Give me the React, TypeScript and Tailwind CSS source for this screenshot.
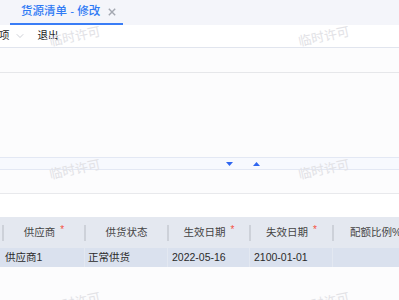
import { ChevronDown } from 'lucide-react';

const font = { fontFamily: '"Liberation Sans", "Noto Sans CJK SC", sans-serif' };

function Mark({ className }: { className: string }) {
    return (
        <span className={`absolute pointer-events-none select-none text-[13px] text-[#e2e2e6] -rotate-12 whitespace-nowrap ${className}`}>
            临时许可
        </span>
    );
}

function Star() {
    return <span className="text-[#f5523f] text-[10px] ml-[5px] relative -top-[3px]">*</span>;
}

function Sep() {
    return <div className="w-[2px] h-[16px] bg-[#cdd1d9] shrink-0" />;
}

export default function App() {
    return (
        <div className="relative w-[399px] h-[300px] overflow-hidden bg-[#fcfcfd] text-[#333]" style={font}>
            {/* tab bar */}
            <div className="h-[25px] bg-[#f4f5fa] flex pl-[10px]">
                <div className="w-[113px] h-full flex items-center gap-[8px] pl-[11px] border-b-2 border-[#3a7df6]">
                    <span className="text-[11.5px] font-medium text-[#2f7af5] leading-none whitespace-nowrap">货源清单 - 修改</span>
                    <svg width="8" height="8" viewBox="0 0 8 8" className="shrink-0">
                        <path d="M0.8 0.8L7.2 7.2M7.2 0.8L0.8 7.2" stroke="#a3a7b0" strokeWidth="1.4" />
                    </svg>
                </div>
            </div>

            {/* toolbar */}
            <div className="h-[23px] bg-white border-b border-[#e1e5ee] flex items-center text-[10.5px] text-[#222]">
                <span className="-ml-[1px]">项</span>
                <ChevronDown className="ml-[4px] w-[12px] h-[12px] text-[#b3b7c0]" strokeWidth={1.3} />
                <span className="ml-[12px]">退出</span>
            </div>

            <div className="h-[25px] border-b border-[#e6e7ea]" />
            <div className="h-[84px]" />

            {/* collapse strip */}
            <div className="h-[13px] bg-[#f7f9fe] border-y border-[#e3e8f4] flex items-center justify-center gap-[20px] pl-[86px]">
                <svg width="7" height="4" viewBox="0 0 7 4"><path d="M0 0H7L3.5 4Z" fill="#2f66f0" /></svg>
                <svg width="7" height="4" viewBox="0 0 7 4"><path d="M0 4H7L3.5 0Z" fill="#2f66f0" /></svg>
            </div>

            <div className="h-[24px] border-b border-[#e8e9ec]" />
            <div className="h-[23px] bg-white" />

            {/* grid header */}
            <div className="h-[31px] bg-[#e4e8f0] flex items-center text-[10.5px] text-[#444]">
                <div className="w-[2px] shrink-0" />
                <Sep />
                <div className="w-[80px] shrink-0 flex justify-center">供应商<Star /></div>
                <Sep />
                <div className="w-[81px] shrink-0 flex justify-center">供货状态</div>
                <Sep />
                <div className="w-[80px] shrink-0 flex justify-center">生效日期<Star /></div>
                <Sep />
                <div className="w-[81px] shrink-0 flex justify-center">失效日期<Star /></div>
                <Sep />
                <div className="pl-[16px] whitespace-nowrap">配额比例%</div>
            </div>

            {/* selected row */}
            <div className="h-[19px] bg-[#dae1ee] flex items-center text-[10.5px] text-[#2a2a2a]">
                <div className="w-[85px] shrink-0 h-full flex items-center pl-[5px] border-r border-[#e3e8f1]">供应商1</div>
                <div className="w-[83px] shrink-0 h-full flex items-center pl-[3px] border-r border-[#e3e8f1]">正常供货</div>
                <div className="w-[82px] shrink-0 h-full flex items-center pl-[4px] border-r border-[#e3e8f1]">2022-05-16</div>
                <div className="w-[83px] shrink-0 h-full flex items-center pl-[4px] border-r border-[#e3e8f1]">2100-01-01</div>
                <div className="flex-1" />
            </div>

            <Mark className="left-[49px] top-[27px]" />
            <Mark className="left-[298px] top-[27px]" />
            <Mark className="left-[49px] top-[160px]" />
            <Mark className="left-[298px] top-[160px]" />
            <Mark className="left-[49px] top-[293px]" />
            <Mark className="left-[298px] top-[293px]" />
        </div>
    );
}
